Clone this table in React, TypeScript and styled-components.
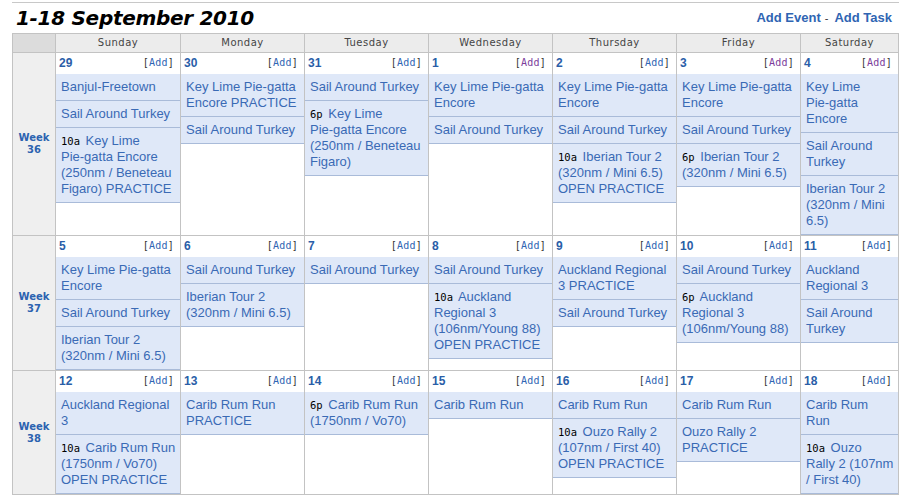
import React from "react";
import styled, { createGlobalStyle } from "styled-components";

const GlobalStyle = createGlobalStyle`
  html, body { margin: 0; padding: 0; background: #fff; overflow: hidden; }
  body { font-family: "Liberation Sans", Arial, sans-serif; }
`;

const Page = styled.div`
  padding: 2px 0 0 12px;
`;

const Frame = styled.div`
  width: 887px;
  border-top: 1px solid #c8c8c8;
`;

const TitleBar = styled.div`
  display: flex;
  justify-content: space-between;
  align-items: center;
  height: 30px;
  padding: 0 7px 0 4px;
`;

const Title = styled.h1`
  margin: 0;
  font: italic bold 20px/24px "DejaVu Sans", Verdana, sans-serif;
  letter-spacing: -0.3px;
  color: #000;
`;

const Actions = styled.div`
  font: bold 13px/16px "Liberation Sans", Arial, sans-serif;
  color: #333;
`;

const ActionLink = styled.a`
  color: #2f65b3;
  text-decoration: none;
`;

const Sep = styled.span`
  font-weight: normal;
  font-size: 11px;
  margin: 0 6px 0 4px;
`;

const Calendar = styled.table`
  width: 887px;
  border-collapse: collapse;
  table-layout: fixed;
  border: 1px solid #c3c3c3;
`;

const Col = styled.col<{ $w?: number }>`
  width: ${(p) => (p.$w ? `${p.$w}px` : "auto")};
`;

const HeadCell = styled.th<{ $corner?: boolean }>`
  background: ${(p) => (p.$corner ? "#dcdcdc" : "#ececec")};
  border: 1px solid #c3c3c3;
  padding: 0;
  height: 18px;
  font: normal 10px/18px "DejaVu Sans", Verdana, sans-serif;
  letter-spacing: 0.5px;
  color: #444;
  text-align: center;
`;

const WeekCell = styled.td`
  background: #efefef;
  border: 1px solid #c3c3c3;
  text-align: center;
  vertical-align: middle;
  padding: 0;
  font: bold 10px/12px "DejaVu Sans", Verdana, sans-serif;
  color: #2c63b0;
`;

const DayCell = styled.td`
  background: #fff;
  border: 1px solid #c3c3c3;
  vertical-align: top;
  padding: 0;
`;

const DayHead = styled.div`
  display: flex;
  justify-content: space-between;
  align-items: center;
  height: 21px;
  box-sizing: border-box;
  padding: 1px 6px 2px 3px;
`;

const DayNum = styled.span`
  font: bold 12px/18px "Liberation Sans", Arial, sans-serif;
  color: #2a5ea8;
`;

const AddLink = styled.span<{ $visited?: boolean }>`
  font: 10px/18px "DejaVu Sans Mono", monospace;
  letter-spacing: 0.2px;
  color: #333;
  & > b {
    font-weight: normal;
    color: ${(p) => (p.$visited ? "#7b3d9b" : "#2f65b3")};
  }
`;

const Event = styled.div`
  background: #dfe8f8;
  border-bottom: 1px solid #a9bbd9;
  padding: 5px 4px 5px 5px;
  font: 13px/16px "Liberation Sans", Arial, sans-serif;
  color: #3a6ab5;
`;

const Time = styled.span`
  font: 10.5px/16px "DejaVu Sans Mono", monospace;
  color: #000;
  margin-right: 2px;
`;

const NoBreak = styled.span`
  white-space: nowrap;
`;

type Ev = { t?: string; x: string };
type Day = { n: number; v?: boolean; ev: Ev[] };

const KL = "Key Lime Pie-gatta Encore";
const SAT = "Sail Around Turkey";
const IB = "Iberian Tour 2 (320nm / Mini 6.5)";
const CRR = "Carib Rum Run";

const weeks: { w: number; days: Day[] }[] = [
  {
    w: 36,
    days: [
      { n: 29, ev: [{ x: "Banjul-Freetown" }, { x: SAT }, { t: "10a", x: "Key Lime Pie-gatta Encore (250nm / Beneteau Figaro) PRACTICE" }] },
      { n: 30, ev: [{ x: "Key Lime Pie-gatta Encore PRACTICE" }, { x: SAT }] },
      { n: 31, ev: [{ x: SAT }, { t: "6p", x: "Key Lime Pie-gatta Encore (250nm / Beneteau Figaro)" }] },
      { n: 1, v: true, ev: [{ x: KL }, { x: SAT }] },
      { n: 2, ev: [{ x: KL }, { x: SAT }, { t: "10a", x: "Iberian Tour 2 (320nm / Mini 6.5) OPEN PRACTICE" }] },
      { n: 3, v: true, ev: [{ x: KL }, { x: SAT }, { t: "6p", x: IB }] },
      { n: 4, v: true, ev: [{ x: KL }, { x: SAT }, { x: IB }] },
    ],
  },
  {
    w: 37,
    days: [
      { n: 5, ev: [{ x: KL }, { x: SAT }, { x: IB }] },
      { n: 6, ev: [{ x: SAT }, { x: IB }] },
      { n: 7, ev: [{ x: SAT }] },
      { n: 8, ev: [{ x: SAT }, { t: "10a", x: "Auckland Regional 3 (106nm/Young 88) OPEN PRACTICE" }] },
      { n: 9, ev: [{ x: "Auckland Regional 3 PRACTICE" }, { x: SAT }] },
      { n: 10, ev: [{ x: SAT }, { t: "6p", x: "Auckland Regional 3 (106nm/Young 88)" }] },
      { n: 11, ev: [{ x: "Auckland Regional 3" }, { x: SAT }] },
    ],
  },
  {
    w: 38,
    days: [
      { n: 12, ev: [{ x: "Auckland Regional 3" }, { t: "10a", x: "Carib Rum Run (1750nm / Vo70) OPEN PRACTICE" }] },
      { n: 13, ev: [{ x: "Carib Rum Run PRACTICE" }] },
      { n: 14, ev: [{ t: "6p", x: "Carib Rum Run (1750nm / Vo70)" }] },
      { n: 15, ev: [{ x: CRR }] },
      { n: 16, ev: [{ x: CRR }, { t: "10a", x: "Ouzo Rally 2 (107nm / First 40) OPEN PRACTICE" }] },
      { n: 17, ev: [{ x: CRR }, { x: "Ouzo Rally 2 PRACTICE" }] },
      { n: 18, ev: [{ x: CRR }, { t: "10a", x: "Ouzo Rally 2 (107nm / First 40)" }] },
    ],
  },
];

const dayNames = ["Sunday", "Monday", "Tuesday", "Wednesday", "Thursday", "Friday", "Saturday"];

function EventText({ text }: { text: string }) {
  const parts = text.split(/(\S*-\S*)/);
  return (
    <>
      {parts.map((p, i) => (p.includes("-") ? <NoBreak key={i}>{p}</NoBreak> : p))}
    </>
  );
}

export default function App() {
  return (
    <>
      <GlobalStyle />
      <Page>
        <Frame>
          <TitleBar>
            <Title>1-18 September 2010</Title>
            <Actions>
              <ActionLink href="#">Add Event</ActionLink>
              <Sep>-</Sep>
              <ActionLink href="#">Add Task</ActionLink>
            </Actions>
          </TitleBar>
          <Calendar>
            <colgroup>
              <Col $w={43} />
              <Col $w={125} />
              <Col $w={124} />
              <Col $w={124} />
              <Col $w={124} />
              <Col $w={124} />
              <Col $w={124} />
              <Col />
            </colgroup>
            <thead>
              <tr>
                <HeadCell $corner />
                {dayNames.map((d) => (
                  <HeadCell key={d}>{d}</HeadCell>
                ))}
              </tr>
            </thead>
            <tbody>
              {weeks.map((wk) => (
                <tr key={wk.w}>
                  <WeekCell>
                    Week
                    <br />
                    {wk.w}
                  </WeekCell>
                  {wk.days.map((d) => (
                    <DayCell key={d.n}>
                      <DayHead>
                        <DayNum>{d.n}</DayNum>
                        <AddLink $visited={d.v}>
                          [<b>Add</b>]
                        </AddLink>
                      </DayHead>
                      {d.ev.map((e, i) => (
                        <Event key={i}>
                          {e.t && <Time>{e.t}</Time>}
                          {e.t ? " " : ""}
                          <EventText text={e.x} />
                        </Event>
                      ))}
                    </DayCell>
                  ))}
                </tr>
              ))}
            </tbody>
          </Calendar>
        </Frame>
      </Page>
    </>
  );
}
